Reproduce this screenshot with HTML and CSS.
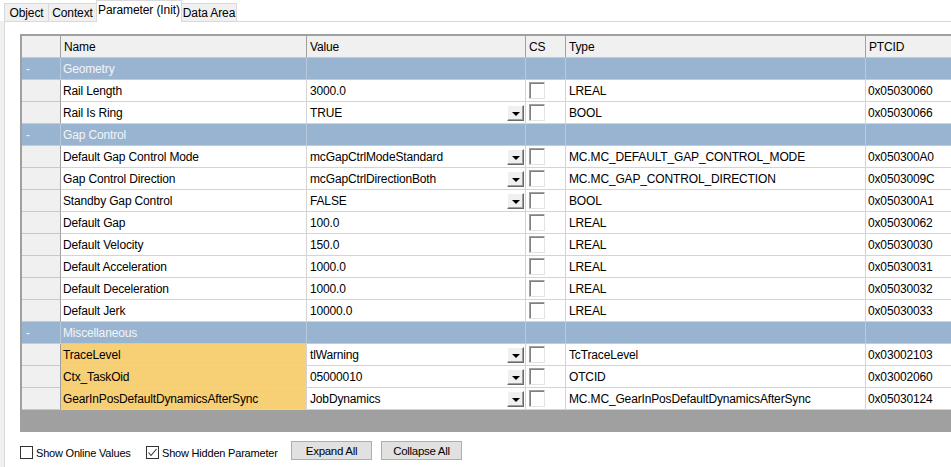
FILE: index.html
```html
<!DOCTYPE html>
<html>
<head>
<meta charset="utf-8">
<link rel="stylesheet" href="styles.css">
</head>
<body>
<div class="tabs">
  <div class="tab t-object">Object</div>
  <div class="tab t-context">Context</div>
  <div class="tab t-param active">Parameter (Init)</div>
  <div class="tab t-data">Data Area</div>
</div>
<div class="panel">
  <div class="gridwrap">
    <div class="grid">
      <div class="c rh hd"></div><div class="c hd name">Name</div><div class="c hd">Value</div><div class="c hd">CS</div><div class="c hd">Type</div><div class="c hd last">PTCID</div>

      <div class="c rh grp">-</div><div class="c grp name">Geometry</div><div class="c grp"></div><div class="c grp"></div><div class="c grp"></div><div class="c grp last"></div>

      <div class="c rh"></div><div class="c name">Rail Length</div><div class="c">3000.0</div><div class="c cs"><span class="cb"></span></div><div class="c">LREAL</div><div class="c last">0x05030060</div>
      <div class="c rh"></div><div class="c name">Rail Is Ring</div><div class="c val">TRUE<span class="dd"></span></div><div class="c cs"><span class="cb"></span></div><div class="c">BOOL</div><div class="c last">0x05030066</div>

      <div class="c rh grp">-</div><div class="c grp name">Gap Control</div><div class="c grp"></div><div class="c grp"></div><div class="c grp"></div><div class="c grp last"></div>

      <div class="c rh"></div><div class="c name">Default Gap Control Mode</div><div class="c val">mcGapCtrlModeStandard<span class="dd"></span></div><div class="c cs"><span class="cb"></span></div><div class="c">MC.MC_DEFAULT_GAP_CONTROL_MODE</div><div class="c last">0x050300A0</div>
      <div class="c rh"></div><div class="c name">Gap Control Direction</div><div class="c val">mcGapCtrlDirectionBoth<span class="dd"></span></div><div class="c cs"><span class="cb"></span></div><div class="c">MC.MC_GAP_CONTROL_DIRECTION</div><div class="c last">0x0503009C</div>
      <div class="c rh"></div><div class="c name">Standby Gap Control</div><div class="c val">FALSE<span class="dd"></span></div><div class="c cs"><span class="cb"></span></div><div class="c">BOOL</div><div class="c last">0x050300A1</div>
      <div class="c rh"></div><div class="c name">Default Gap</div><div class="c">100.0</div><div class="c cs"><span class="cb"></span></div><div class="c">LREAL</div><div class="c last">0x05030062</div>
      <div class="c rh"></div><div class="c name">Default Velocity</div><div class="c">150.0</div><div class="c cs"><span class="cb"></span></div><div class="c">LREAL</div><div class="c last">0x05030030</div>
      <div class="c rh"></div><div class="c name">Default Acceleration</div><div class="c">1000.0</div><div class="c cs"><span class="cb"></span></div><div class="c">LREAL</div><div class="c last">0x05030031</div>
      <div class="c rh"></div><div class="c name">Default Deceleration</div><div class="c">1000.0</div><div class="c cs"><span class="cb"></span></div><div class="c">LREAL</div><div class="c last">0x05030032</div>
      <div class="c rh"></div><div class="c name">Default Jerk</div><div class="c">10000.0</div><div class="c cs"><span class="cb"></span></div><div class="c">LREAL</div><div class="c last">0x05030033</div>

      <div class="c rh grp">-</div><div class="c grp name">Miscellaneous</div><div class="c grp"></div><div class="c grp"></div><div class="c grp"></div><div class="c grp last"></div>

      <div class="c rh"></div><div class="c name hl">TraceLevel</div><div class="c val">tlWarning<span class="dd"></span></div><div class="c cs"><span class="cb"></span></div><div class="c">TcTraceLevel</div><div class="c last">0x03002103</div>
      <div class="c rh"></div><div class="c name hl">Ctx_TaskOid</div><div class="c val">05000010<span class="dd"></span></div><div class="c cs"><span class="cb"></span></div><div class="c">OTCID</div><div class="c last">0x03002060</div>
      <div class="c rh"></div><div class="c name hl">GearInPosDefaultDynamicsAfterSync</div><div class="c val">JobDynamics<span class="dd"></span></div><div class="c cs"><span class="cb"></span></div><div class="c">MC.MC_GearInPosDefaultDynamicsAfterSync</div><div class="c last">0x05030124</div>

      <div class="filler"></div>
    </div>
  </div>
  <div class="bottombar">
    <label class="chk chk1"><span class="box"></span><span class="lbl">Show Online Values</span></label>
    <label class="chk chk2"><span class="box"><svg width="11" height="11" viewBox="0 0 11 11"><polyline points="1.5,5.5 4,8.5 9.5,2" fill="none" stroke="#333" stroke-width="1.1"/></svg></span><span class="lbl">Show Hidden Parameter</span></label>
    <div class="btn">Expand All</div>
    <div class="btn">Collapse All</div>
  </div>
</div>
</body>
</html>
```
FILE: styles.css
```css
html, body {
  margin: 0;
  padding: 0;
  overflow: hidden;
  width: 951px;
  height: 467px;
  background: #f0f0f0;
  font-family: "Liberation Sans", Arial, sans-serif;
  font-size: 12px;
  color: #000;
}

.tabs {
  display: flex;
  align-items: flex-end;
  height: 21px;
  padding-left: 4px;
  background: #fff;
}

.tab {
  box-sizing: border-box;
  height: 18px;
  border: 1px solid #d9d9d9;
  border-bottom: none;
  margin-right: -1px;
  background: #f0f0f0;
  display: flex;
  align-items: center;
  justify-content: center;
  font-size: 12px;
  letter-spacing: -0.1px;
}

.t-object { width: 45px; }
.t-context { width: 49px; }
.t-param { width: 86px; }
.t-data { width: 56px; }

.tab.active {
  background: #fff;
  position: relative;
  z-index: 1;
  margin-bottom: -1px;
  height: 22px;
  padding-bottom: 3px;
}

.panel {
  box-sizing: border-box;
  height: 446px;
  margin-left: 4px;
  border-top: 1px solid #d9d9d9;
  border-left: 1px solid #d9d9d9;
  background: #fff;
  padding: 12px 0 0 15px;
}

.gridwrap {
  overflow: hidden;
  width: 940px;
}

.grid {
  display: grid;
  grid-template-columns: 39px 246px 219px 40px 300px 200px;
  grid-auto-rows: 22px;
  width: 1044px;
  border-left: 2px solid #a0a0a0;
  border-top: 2px solid #a0a0a0;
  background: #fff;
  letter-spacing: -0.15px;
}

.c {
  box-sizing: border-box;
  border-right: 1px solid #d4d4d4;
  border-bottom: 1px solid #d4d4d4;
  padding-left: 3px;
  display: flex;
  align-items: center;
  white-space: nowrap;
  overflow: hidden;
  background: #fff;
}

.c.name { padding-left: 2px; }
.c.last { padding-left: 2px; }

.c.rh {
  background: #f0f0f0;
  border-right: 1px solid #a0a0a0;
  border-bottom: 1px solid #c8c8c8;
  padding-left: 4px;
}

.c.hd {
  background: #f0f0f0;
  border-right: 1px solid #a0a0a0;
  border-bottom: 1px solid #c8c8c8;
  padding-left: 3px;
}

.c.grp {
  background: #99b4d1;
  color: #f2f4f8;
  border-right: 1px solid #b9c9dc;
  border-bottom: 1px solid #c0ccd9;
}

.c.rh.grp {
  border-right: 1px solid #b9c9dc;
}

.c.hl {
  background: #f7cf74;
}

.c.val {
  position: relative;
}

.dd {
  position: absolute;
  right: 1px;
  top: 3px;
  box-sizing: border-box;
  width: 17px;
  height: 16px;
  background: #f0f0f0;
  border-top: 1px solid #fff;
  border-left: 1px solid #fff;
  border-right: 1px solid #696969;
  border-bottom: 1px solid #696969;
  box-shadow: inset -1px -1px 0 #a0a0a0;
  display: flex;
  align-items: center;
  justify-content: center;
}

.dd::after {
  content: "";
  display: block;
  width: 0;
  height: 0;
  border-left: 4px solid transparent;
  border-right: 4px solid transparent;
  border-top: 4px solid #000;
  margin-top: 1px;
}

.c.cs {
  padding-left: 3px;
}

.cb {
  box-sizing: border-box;
  display: block;
  width: 16px;
  height: 17px;
  border-top: 1px solid #a0a0a0;
  border-left: 1px solid #a0a0a0;
  border-right: 1px solid #e3e3e3;
  border-bottom: 1px solid #e3e3e3;
  box-shadow: inset 1px 1px 0 #808080;
  background: #fff;
}

.filler {
  grid-column: 1 / -1;
  height: 24px;
  background: #a0a0a0;
  border-bottom: 1px solid #e3e3e3;
}

.bottombar {
  display: flex;
  align-items: center;
  height: 19px;
  margin-top: 9px;
  font-size: 11px;
  letter-spacing: -0.2px;
}

.chk {
  display: flex;
  align-items: center;
  margin-top: 4px;
}

.chk1 { width: 126px; }
.chk2 { width: 145px; }

.box {
  box-sizing: border-box;
  width: 13px;
  height: 13px;
  border: 1px solid #333;
  background: #fff;
  margin-right: 3px;
  display: flex;
  align-items: center;
  justify-content: center;
}

.box svg { display: block; }

.btn {
  box-sizing: border-box;
  width: 81px;
  height: 19px;
  margin-right: 9px;
  background: #e1e1e1;
  border: 1px solid #adadad;
  display: flex;
  align-items: center;
  justify-content: center;
  font-size: 11.5px;
  letter-spacing: -0.3px;
}
```
